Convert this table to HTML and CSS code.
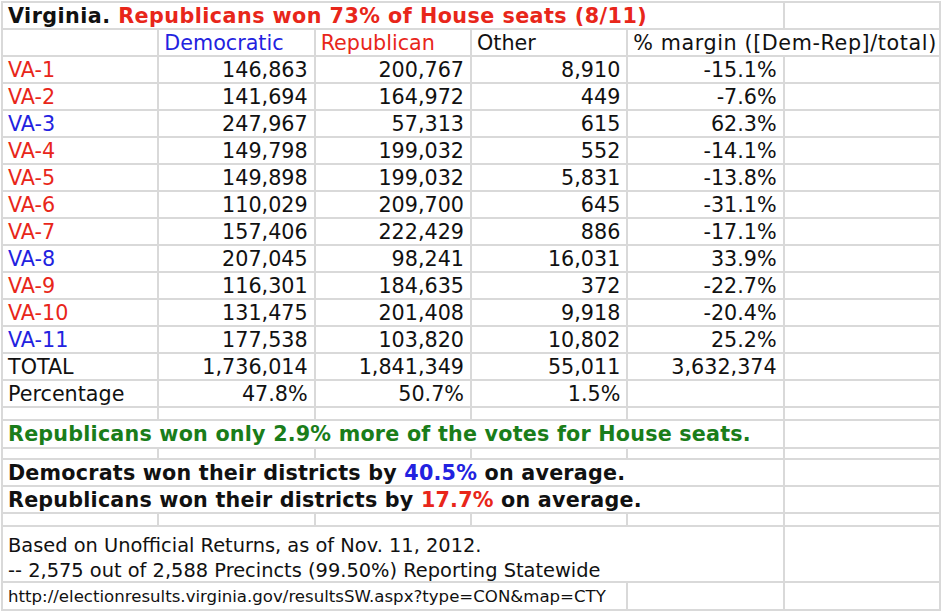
FILE: index.html
```html
<!DOCTYPE html>
<html>
<head>
<meta charset="utf-8">
<link rel="stylesheet" href="styles.css">
</head>
<body>
<div class="sheet">
  <div class="c span5 bold title-row">Virginia. <span class="red">Republicans won 73% of House seats (8/11)</span></div>
  <div class="c"></div>

  <div class="c"></div>
  <div class="c blue">Democratic</div>
  <div class="c red">Republican</div>
  <div class="c">Other</div>
  <div class="c span2 margin-head">% margin ([Dem-Rep]/total)</div>

  <div class="c red">VA-1</div><div class="c num">146,863</div><div class="c num">200,767</div><div class="c num">8,910</div><div class="c num">-15.1%</div><div class="c"></div>
  <div class="c red">VA-2</div><div class="c num">141,694</div><div class="c num">164,972</div><div class="c num">449</div><div class="c num">-7.6%</div><div class="c"></div>
  <div class="c blue">VA-3</div><div class="c num">247,967</div><div class="c num">57,313</div><div class="c num">615</div><div class="c num">62.3%</div><div class="c"></div>
  <div class="c red">VA-4</div><div class="c num">149,798</div><div class="c num">199,032</div><div class="c num">552</div><div class="c num">-14.1%</div><div class="c"></div>
  <div class="c red">VA-5</div><div class="c num">149,898</div><div class="c num">199,032</div><div class="c num">5,831</div><div class="c num">-13.8%</div><div class="c"></div>
  <div class="c red">VA-6</div><div class="c num">110,029</div><div class="c num">209,700</div><div class="c num">645</div><div class="c num">-31.1%</div><div class="c"></div>
  <div class="c red">VA-7</div><div class="c num">157,406</div><div class="c num">222,429</div><div class="c num">886</div><div class="c num">-17.1%</div><div class="c"></div>
  <div class="c blue">VA-8</div><div class="c num">207,045</div><div class="c num">98,241</div><div class="c num">16,031</div><div class="c num">33.9%</div><div class="c"></div>
  <div class="c red">VA-9</div><div class="c num">116,301</div><div class="c num">184,635</div><div class="c num">372</div><div class="c num">-22.7%</div><div class="c"></div>
  <div class="c red">VA-10</div><div class="c num">131,475</div><div class="c num">201,408</div><div class="c num">9,918</div><div class="c num">-20.4%</div><div class="c"></div>
  <div class="c blue">VA-11</div><div class="c num">177,538</div><div class="c num">103,820</div><div class="c num">10,802</div><div class="c num">25.2%</div><div class="c"></div>
  <div class="c">TOTAL</div><div class="c num">1,736,014</div><div class="c num">1,841,349</div><div class="c num">55,011</div><div class="c num">3,632,374</div><div class="c"></div>
  <div class="c">Percentage</div><div class="c num">47.8%</div><div class="c num">50.7%</div><div class="c num">1.5%</div><div class="c"></div><div class="c"></div>

  <div class="c e"></div><div class="c e"></div><div class="c e"></div><div class="c e"></div><div class="c e"></div><div class="c e"></div>

  <div class="c span5 bold green">Republicans won only 2.9% more of the votes for House seats.</div><div class="c"></div>

  <div class="c e"></div><div class="c e"></div><div class="c e"></div><div class="c e"></div><div class="c e"></div><div class="c e"></div>

  <div class="c span5 bold">Democrats won their districts by <span class="blue">40.5%</span> on average.</div><div class="c"></div>
  <div class="c span5 bold">Republicans won their districts by <span class="red">17.7%</span> on average.</div><div class="c"></div>

  <div class="c e"></div><div class="c e"></div><div class="c e"></div><div class="c e"></div><div class="c e"></div><div class="c e"></div>

  <div class="c span5 note">Based on Unofficial Returns, as of Nov. 11, 2012.<br>-- 2,575 out of 2,588 Precincts (99.50%) Reporting Statewide</div><div class="c"></div>

  <div class="c span4 url">http://electionresults.virginia.gov/resultsSW.aspx?type=CON&amp;map=CTY</div><div class="c"></div><div class="c"></div>
</div>
</body>
</html>
```

FILE: styles.css
```css
html, body {
  margin: 0;
  padding: 0;
  background: #ffffff;
}

body {
  padding: 1px 0 0 1px;
}

.sheet {
  width: 940px;
  box-sizing: border-box;
  display: grid;
  grid-template-columns: repeat(6, 1fr);
  grid-template-rows:
    25px 25px
    25px 25px 25px 25px 25px 25px 25px 25px 25px 25px 25px
    25px 25px
    11px 26px 9px 25px 25px 11px 54px 26px;
  gap: 2px;
  padding: 2px;
  background: #d9d9d9;
  font-family: "DejaVu Sans", Verdana, sans-serif;
  font-size: 20.7px;
  line-height: 24px;
  color: #111111;
}

.c {
  background: #ffffff;
  padding: 1px 6px 0 5px;
  white-space: nowrap;
  overflow: visible;
  min-width: 0;
}

.num {
  text-align: right;
}

.span5 { grid-column: span 5; }
.span4 { grid-column: span 4; }
.span2 { grid-column: span 2; }

.bold {
  font-weight: bold;
  letter-spacing: 0.2px;
  line-height: 25px;
}

.title-row {
  letter-spacing: 0.45px;
}

.margin-head {
  letter-spacing: 0.6px;
}

.red { color: #e8261a; }
.blue { color: #2222e0; }
.green { color: #1a7d1a; }

.note {
  font-size: 19.4px;
  line-height: 25px;
  padding-top: 6px;
}

.url {
  font-size: 16.6px;
  line-height: 24px;
  padding-top: 2px;
}
```
